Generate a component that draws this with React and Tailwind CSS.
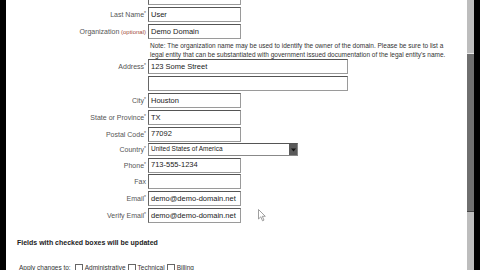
import React from "react";

const inputCls =
  "flex items-center h-[15px] border border-[#9a9a9a] border-t-[#555] border-l-[#666] bg-white pl-[2px] text-[7.5px] text-[#1a1a1a] leading-none whitespace-nowrap overflow-hidden";

function Label({ children, req = true, optional = false }) {
  return (
    <div className="w-[142px] shrink-0 text-right pr-[2px] text-[7px] text-[#555] leading-none whitespace-nowrap">
      {children}
      {optional && <span className="text-[#a04a3a] text-[6px]"> (optional)</span>}
      {req && <span className="text-[5px] align-top">*</span>}
    </div>
  );
}

function Row({ label, value, w = "w-[93px]", h = "h-[17px]", req = true, optional = false }) {
  return (
    <div className={`flex items-center ${h}`}>
      <Label req={req} optional={optional}>{label}</Label>
      <div className={`${inputCls} ${w}`}>{value}</div>
    </div>
  );
}

function Box() {
  return <span className="inline-block w-[8px] h-[8px] border border-[#666] bg-white mr-[2px] align-middle" />;
}

export default function App() {
  return (
    <div className="relative w-[480px] h-[270px] overflow-hidden bg-white flex font-['Liberation_Sans',Arial,sans-serif]">
      <div className="w-[6px] h-full bg-black shrink-0" />
      <div className="flex-1 flex flex-col">
        <div className="flex flex-col mt-[-11px]">
          <Row label="First Name" value="Demo" />
          <Row label="Last Name" value="User" />
          <Row label="Organization" value="Demo Domain" req={false} optional />
          <div className="flex h-[18px]">
            <div className="w-[142px] shrink-0" />
            <div className="pl-[2px] pt-[1px] text-[6.5px] leading-[9px] text-[#333] whitespace-nowrap">
              <div>Note: The organization name may be used to identify the owner of the domain. Please be sure to list a</div>
              <div>legal entity that can be substantiated with government issued documentation of the legal entity's name.</div>
            </div>
          </div>
          <Row label="Address" value="123 Some Street" w="w-[200px]" />
          <Row label="" value="" w="w-[200px]" req={false} />
          <Row label="City" value="Houston" />
          <Row label="State or Province" value="TX" />
          <Row label="Postal Code" value="77092" h="h-[16px]" />
          <div className="flex items-center h-[15px]">
            <Label>Country</Label>
            <div className="flex items-center h-[13px] w-[150px] border border-[#888] border-t-[#555] bg-white">
              <div className="flex-1 pl-[2px] text-[6.5px] text-[#222] leading-none whitespace-nowrap">United States of America</div>
              <div className="w-[8px] h-full bg-[#5a5a5a] flex items-center justify-center">
                <svg width="5" height="4" viewBox="0 0 5 4"><path d="M0 0.5h5L2.5 3.5z" fill="#111" /></svg>
              </div>
            </div>
          </div>
          <Row label="Phone" value="713-555-1234" h="h-[16px]" />
          <Row label="Fax" value="" req={false} />
          <Row label="Email" value="demo@demo-domain.net" />
          <Row label="Verify Email" value="demo@demo-domain.net" />
        </div>
        <div className="mt-[14px] pl-[11px] h-[10px] flex items-center text-[7px] font-bold text-[#222] whitespace-nowrap">
          Fields with checked boxes will be updated
        </div>
        <div className="mt-[15px] pl-[13px] h-[10px] flex items-center text-[6.5px] text-[#333] whitespace-nowrap">
          <span className="mr-[4px]">Apply changes to:</span>
          <Box /><span className="mr-[2px]">Administrative</span>
          <Box /><span className="mr-[2px]">Technical</span>
          <Box /><span>Billing</span>
        </div>
      </div>
      <div className="w-[7px] h-full bg-[#bdbdbd] shrink-0 flex flex-col">
        <div className="h-[53px]" />
        <div className="h-[159px] bg-[#6f6f6f] border-t border-t-[#e8e8e8] border-b border-b-[#444]" />
      </div>
      <div className="w-[6px] h-full bg-black shrink-0" />
      <svg className="absolute left-[258px] top-[209px]" width="8" height="13" viewBox="0 0 8 13">
        <path d="M0.5 0.5 L0.5 10 L2.8 7.8 L4.5 11.8 L6 11.1 L4.3 7.3 L7.3 7.3 Z" fill="#fff" stroke="#888" strokeWidth="0.8" />
      </svg>
    </div>
  );
}
